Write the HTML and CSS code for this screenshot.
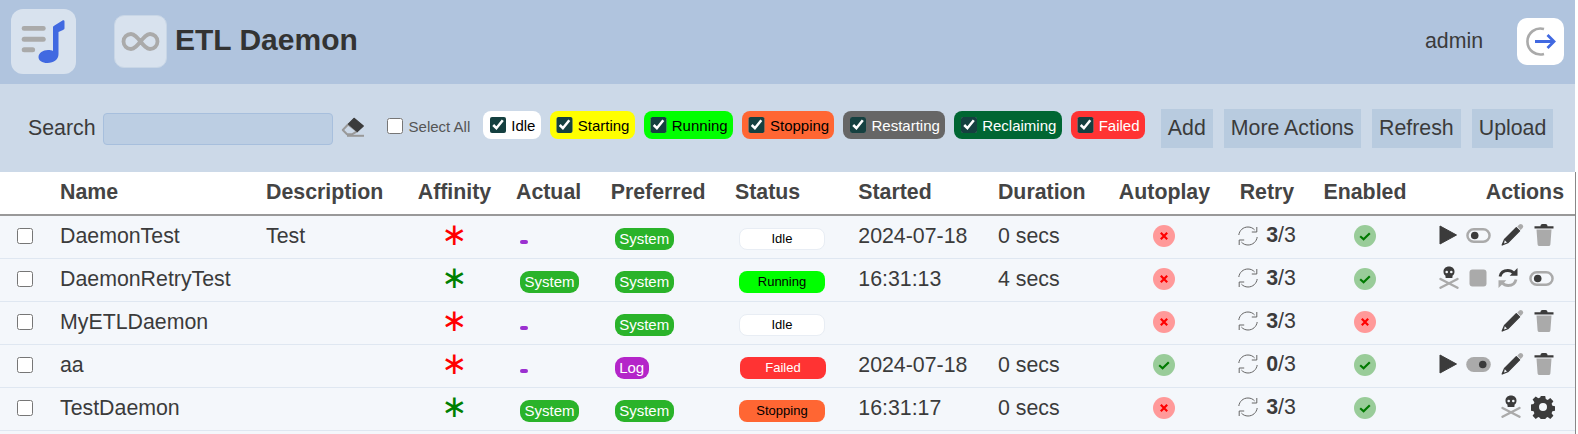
FILE: index.html
```html
<!DOCTYPE html>
<html lang="en">
<head>
<meta charset="utf-8">
<title>ETL Daemon</title>
<link rel="stylesheet" href="styles.css">
</head>
<body>
<svg class="defs" width="0" height="0" aria-hidden="true">
  <defs>
    <symbol id="i-play" viewBox="0 0 18 20"><path d="M1 1v18L17.500 10z" fill="#3b3b3b" stroke="#3b3b3b" stroke-width="1" stroke-linejoin="round"/></symbol>
    <symbol id="i-toggle" viewBox="0 0 26 18"><rect x="1.300" y="2.300" width="23.400" height="13.400" rx="6.700" fill="none" stroke="#aaa" stroke-width="2.600"/><circle cx="9" cy="9" r="4" fill="#3b3b3b"/></symbol>
    <symbol id="i-toggle-on" viewBox="0 0 26 18"><rect x="0" y="1" width="26" height="16" rx="8" fill="#aaa"/><circle cx="17.500" cy="9" r="4" fill="#3b3b3b"/></symbol>
    <symbol id="i-pencil" viewBox="0 0 24 24"><path d="M17.300 3.600l2-2a2 2 0 0 1 2.800 0l.5.5a2 2 0 0 1 0 2.800l-2 2z" fill="#aaa"/><path d="M16.300 4.600l3.300 3.300L7.800 19.700l-5.600 2.300 2.300-5.600z" fill="#3b3b3b" stroke="#3b3b3b" stroke-width="1.300" stroke-linejoin="round"/><path d="M4.800 17.200l2.200 2.200-3 1z" fill="#f4f7fb"/></symbol>
    <symbol id="i-trash" viewBox="0 0 20 24"><path d="M2.500 6.500h15l-1.100 15a1.800 1.800 0 0 1-1.800 1.500H5.400a1.800 1.800 0 0 1-1.800-1.500z" fill="#aaa"/><path d="M0.500 3.300h19v2.200H.5zM6.500 3.300c0-1.500.8-2.300 2-2.300h3c1.200 0 2 .8 2 2.300z" fill="#3b3b3b"/></symbol>
    <symbol id="i-skull" viewBox="0 0 20 24"><path d="M1.500 13l17 8.700M18.500 13l-17 8.700" stroke="#aaa" stroke-width="2.400" stroke-linecap="round"/><path d="M10 .5c-3.300 0-5.500 2.200-5.500 5.200 0 1.800.8 3.200 2 4v1.500c0 .5.400.9.900.9h5.200c.5 0 .9-.4.9-.9V9.700c1.200-.8 2-2.200 2-4 0-3-2.200-5.200-5.500-5.200z" fill="#3b3b3b"/><circle cx="7.700" cy="6" r="1.300" fill="#f4f7fb"/><circle cx="12.300" cy="6" r="1.300" fill="#f4f7fb"/></symbol>
    <symbol id="i-stop" viewBox="0 0 18 18"><rect x="0.500" y="0.500" width="17" height="17" rx="3" fill="#aaa"/></symbol>
    <symbol id="i-sync" viewBox="0 0 22 22"><path d="M3 9.500C3.800 5.800 6.800 3.500 10.800 3.500c2.500 0 4.500 1 5.800 2.500" fill="none" stroke="#3b3b3b" stroke-width="2.800"/><path d="M20.500 1v7.800h-7.800z" fill="#3b3b3b"/><path d="M19 12.500c-.8 3.700-3.800 6-7.800 6-2.500 0-4.500-1-5.800-2.500" fill="none" stroke="#aaa" stroke-width="2.800"/><path d="M1.500 21v-7.800h7.800z" fill="#aaa"/></symbol>
    <symbol id="i-gear" viewBox="0 0 24 24"><path fill="#3b3b3b" fill-rule="evenodd" d="M9.800 1h4.400l.6 3.100 1.900.8 2.600-1.800 3.100 3.100-1.800 2.600.8 1.900 3 .6v4.400l-3 .6-.8 1.900 1.800 2.600-3.100 3.100-2.600-1.800-1.900.8-.6 3H9.800l-.6-3-1.900-.8-2.600 1.800-3.100-3.100 1.800-2.600-.8-1.900-3-.6V9.700l3-.6.8-1.900-1.800-2.600 3.100-3.100 2.600 1.800 1.900-.8zM12 8a4 4 0 1 0 0 8 4 4 0 0 0 0-8z"/></symbol>
    <symbol id="i-retry" viewBox="0 0 20 20"><path d="M.8 9C1.500 4.300 5.200 1 10 1c2.700 0 5 1.100 6.600 2.900" fill="none" stroke="#666" stroke-width="1"/><path d="M18.800 1v5h-5" fill="none" stroke="#666" stroke-width="1"/><path d="M19.200 11c-.7 4.700-4.400 8-9.200 8-2.700 0-5-1.100-6.600-2.900" fill="none" stroke="#666" stroke-width="1"/><path d="M1.200 19v-5h5" fill="none" stroke="#666" stroke-width="1"/></symbol>
    <symbol id="i-no" viewBox="0 0 22 22"><circle cx="11" cy="11" r="11" fill="#ff9999"/><path d="M7.800 7.800l6.400 6.400M14.200 7.800l-6.400 6.400" stroke="#f00" stroke-width="2.200"/></symbol>
    <symbol id="i-yes" viewBox="0 0 22 22"><circle cx="11" cy="11" r="11" fill="#99cc99"/><path d="M6.200 11.300l3.400 3 6.200-6" fill="none" stroke="#007a00" stroke-width="2.200"/></symbol>
  </defs>
</svg>
<div class="page">
  <header class="top">
    <a class="app-tile" href="#" aria-label="Home">
      <svg viewBox="0 0 65 65" width="65" height="65"><rect x="10.700" y="17" width="24" height="4.700" rx="2.300" fill="#aaa"/><rect x="10.700" y="27.700" width="24" height="5" rx="2.500" fill="#aaa"/><rect x="10.700" y="38.300" width="13.400" height="5" rx="2.500" fill="#aaa"/><path d="M42 18.500C42 17.500 42.500 17 43.500 16.500L51.500 11.500C52.500 11 53.500 11.500 53.500 12.500V19C53.500 20 53 20.500 52 21L47.500 23V45C47.500 50.500 43 54 36.500 54C31 54 27.500 51.500 27.500 48C27.500 44 32 41 37 41C39 41 41 41.400 42 42Z" fill="#4169e1"/></svg>
    </a>
    <div class="title-group">
      <div class="module-tile">
        <svg viewBox="0 0 53 53" width="53" height="53"><path d="M26.500 26.500c-3.500-4.500-6-7.500-9.500-7.500a7.500 7.500 0 0 0 0 15c3.500 0 6-3 9.500-7.500s6-7.500 9.500-7.500a7.500 7.500 0 0 1 0 15c-3.500 0-6-3-9.500-7.500z" fill="none" stroke="#aaa" stroke-width="3.800"/></svg>
      </div>
      <h1>ETL Daemon</h1>
    </div>
    <div class="user-group">
      <span class="user">admin</span>
      <a class="logout" href="#" aria-label="Log out">
        <svg viewBox="0 0 47 47" width="47" height="47"><path d="M27 11a13 13 0 1 0 0 25" fill="none" stroke="#aaa" stroke-width="2.600"/><path d="M18 23.500h18M30.500 17l6.500 6.500-6.500 6.500" fill="none" stroke="#4169e1" stroke-width="2.800"/></svg>
      </a>
    </div>
  </header>

  <section class="toolbar">
    <label class="search">Search <input type="text" class="search-input"></label>
    <svg class="eraser" viewBox="0 0 24 22" width="24" height="22"><path d="M7 8.500L1.800 14l4.200 4.300h5l5-3z" fill="#ccd9e8" stroke="#999" stroke-width="2" stroke-linejoin="round"/><path d="M13 2.300L22.300 10l-6 5.500L7.500 8z" fill="#3b3b3b" stroke="#3b3b3b" stroke-width="1.200" stroke-linejoin="round"/><path d="M6 19.800h17" stroke="#999" stroke-width="2"/></svg>
    <label class="select-all"><input type="checkbox" class="box"> Select All</label>
    <div class="filters">
      <label class="chip st-idle"><input type="checkbox" checked> Idle</label>
      <label class="chip st-starting"><input type="checkbox" checked> Starting</label>
      <label class="chip st-running"><input type="checkbox" checked> Running</label>
      <label class="chip st-stopping"><input type="checkbox" checked> Stopping</label>
      <label class="chip st-restarting"><input type="checkbox" checked> Restarting</label>
      <label class="chip st-reclaiming"><input type="checkbox" checked> Reclaiming</label>
      <label class="chip st-failed"><input type="checkbox" checked> Failed</label>
    </div>
    <div class="buttons">
      <button type="button">Add</button>
      <button type="button">More Actions</button>
      <button type="button">Refresh</button>
      <button type="button">Upload</button>
    </div>
  </section>

  <div class="grid-wrap">
  <table class="grid">
    <colgroup>
      <col class="c-check"><col class="c-name"><col class="c-desc"><col class="c-aff"><col class="c-actual"><col class="c-pref"><col class="c-status"><col class="c-started"><col class="c-dur"><col class="c-auto"><col class="c-retry"><col class="c-en"><col class="c-actions">
    </colgroup>
    <thead>
      <tr>
        <th></th><th>Name</th><th>Description</th><th class="mid">Affinity</th><th>Actual</th><th>Preferred</th><th>Status</th><th>Started</th><th>Duration</th><th class="mid">Autoplay</th><th class="mid">Retry</th><th class="mid">Enabled</th><th class="end">Actions</th>
      </tr>
    </thead>
    <tbody>
      <tr>
        <td class="mid"><input type="checkbox" class="box"></td>
        <td>DaemonTest</td><td>Test</td>
        <td class="mid"><span class="star red">∗</span></td>
        <td class="low"><span class="tag dash"></span></td>
        <td class="low"><span class="tag sys">System</span></td>
        <td class="low"><span class="pill st-idle">Idle</span></td>
        <td>2024-07-18</td><td>0 secs</td>
        <td class="mid"><svg class="flag"><use href="#i-no"/></svg></td>
        <td class="mid"><span class="retry"><svg class="ret"><use href="#i-retry"/></svg><span><b>3</b>/3</span></span></td>
        <td class="mid"><svg class="flag"><use href="#i-yes"/></svg></td>
        <td class="ac"><div class="acts"><svg class="a-play"><use href="#i-play"/></svg><svg class="a-tog"><use href="#i-toggle"/></svg><svg class="a-pen"><use href="#i-pencil"/></svg><svg class="a-trash"><use href="#i-trash"/></svg></div></td>
      </tr>
      <tr>
        <td class="mid"><input type="checkbox" class="box"></td>
        <td>DaemonRetryTest</td><td></td>
        <td class="mid"><span class="star green">∗</span></td>
        <td class="low"><span class="tag sys">System</span></td>
        <td class="low"><span class="tag sys">System</span></td>
        <td class="low"><span class="pill st-running">Running</span></td>
        <td>16:31:13</td><td>4 secs</td>
        <td class="mid"><svg class="flag"><use href="#i-no"/></svg></td>
        <td class="mid"><span class="retry"><svg class="ret"><use href="#i-retry"/></svg><span><b>3</b>/3</span></span></td>
        <td class="mid"><svg class="flag"><use href="#i-yes"/></svg></td>
        <td class="ac"><div class="acts"><svg class="a-skull"><use href="#i-skull"/></svg><svg class="a-stop"><use href="#i-stop"/></svg><svg class="a-sync"><use href="#i-sync"/></svg><svg class="a-tog"><use href="#i-toggle"/></svg></div></td>
      </tr>
      <tr>
        <td class="mid"><input type="checkbox" class="box"></td>
        <td>MyETLDaemon</td><td></td>
        <td class="mid"><span class="star red">∗</span></td>
        <td class="low"><span class="tag dash"></span></td>
        <td class="low"><span class="tag sys">System</span></td>
        <td class="low"><span class="pill st-idle">Idle</span></td>
        <td></td><td></td>
        <td class="mid"><svg class="flag"><use href="#i-no"/></svg></td>
        <td class="mid"><span class="retry"><svg class="ret"><use href="#i-retry"/></svg><span><b>3</b>/3</span></span></td>
        <td class="mid"><svg class="flag"><use href="#i-no"/></svg></td>
        <td class="ac"><div class="acts"><svg class="a-pen"><use href="#i-pencil"/></svg><svg class="a-trash"><use href="#i-trash"/></svg></div></td>
      </tr>
      <tr>
        <td class="mid"><input type="checkbox" class="box"></td>
        <td>aa</td><td></td>
        <td class="mid"><span class="star red">∗</span></td>
        <td class="low"><span class="tag dash"></span></td>
        <td class="low"><span class="tag log">Log</span></td>
        <td class="low"><span class="pill st-failed shift">Failed</span></td>
        <td>2024-07-18</td><td>0 secs</td>
        <td class="mid"><svg class="flag"><use href="#i-yes"/></svg></td>
        <td class="mid"><span class="retry"><svg class="ret"><use href="#i-retry"/></svg><span><b>0</b>/3</span></span></td>
        <td class="mid"><svg class="flag"><use href="#i-yes"/></svg></td>
        <td class="ac"><div class="acts"><svg class="a-play"><use href="#i-play"/></svg><svg class="a-tog"><use href="#i-toggle-on"/></svg><svg class="a-pen"><use href="#i-pencil"/></svg><svg class="a-trash"><use href="#i-trash"/></svg></div></td>
      </tr>
      <tr>
        <td class="mid"><input type="checkbox" class="box"></td>
        <td>TestDaemon</td><td></td>
        <td class="mid"><span class="star green">∗</span></td>
        <td class="low"><span class="tag sys">System</span></td>
        <td class="low"><span class="tag sys">System</span></td>
        <td class="low"><span class="pill st-stopping">Stopping</span></td>
        <td>16:31:17</td><td>0 secs</td>
        <td class="mid"><svg class="flag"><use href="#i-no"/></svg></td>
        <td class="mid"><span class="retry"><svg class="ret"><use href="#i-retry"/></svg><span><b>3</b>/3</span></span></td>
        <td class="mid"><svg class="flag"><use href="#i-yes"/></svg></td>
        <td class="ac"><div class="acts"><svg class="a-skull"><use href="#i-skull"/></svg><svg class="a-gear"><use href="#i-gear"/></svg></div></td>
      </tr>
    </tbody>
  </table>
  </div>
</div>
</body>
</html>
```
FILE: styles.css
```css
* { box-sizing: border-box; }
html, body { margin: 0; padding: 0; height: 100%; overflow: hidden; background: #fff; }
body { font-family: "Liberation Sans", Arial, sans-serif; color: #3b3b3b; }
.defs { position: absolute; }
.page { width: 1575px; height: 434px; background: #f4f7fb; }

.top { height: 84px; background: #b0c4de; display: flex; align-items: center; padding: 0 11px; }
.app-tile { width: 65px; height: 65px; margin-top: -1px; background: #d8e2ee; border-radius: 12px; display: block; }
.app-tile svg, .module-tile svg, .logout svg { display: block; }
.title-group { display: flex; align-items: center; margin-left: 38px; margin-top: -2px; }
.module-tile { width: 53px; height: 53px; background: #d8e2ee; border: 1px solid #c8d6e6; border-radius: 10px; overflow: hidden; }
.module-tile svg { margin: -1px; }
h1 { margin: -2px 0 0 8px; font-size: 30px; font-weight: 700; color: #333; line-height: 1; }
.user-group { margin-left: auto; display: flex; align-items: center; margin-top: -2px; }
.user { font-size: 21.33px; margin-right: 34px; }
.logout { width: 47px; height: 47px; background: #fff; border-radius: 10px; display: block; }

.toolbar { height: 88px; background: #ccd9e8; display: flex; align-items: flex-start; padding: 25px 20px 0 28px; }
.search { display: flex; align-items: center; font-size: 21.33px; height: 39px; }
.search-input { width: 230px; height: 32px; margin-left: 7px; background: #bccee3; border: 1px solid #a7bfdd; border-radius: 4px; }
.eraser { margin: 7px 0 0 8px; flex: none; }
.select-all { display: flex; align-items: center; font-size: 15px; color: #555; margin: 5px 0 0 22px; height: 24px; white-space: nowrap; }
.box { appearance: auto; width: 16px; height: 16px; margin: 0 6px 0 0; }
td .box { margin: 0; vertical-align: middle; }
.filters { display: flex; gap: 9px; margin: 2px 0 0 13px; }
.chip { display: flex; align-items: center; height: 28px; padding: 0 5.3px 0 6.5px; border-radius: 8px; font-size: 15px; white-space: nowrap; }
.chip input { width: 16.5px; height: 16.5px; margin: 0 5px 0 0; accent-color: #154040; }
.buttons { display: flex; gap: 11px; margin-left: 16px; }
.buttons button { height: 39px; padding: 0 7px; border: 0; border-radius: 0; background: #b8cbdf; color: #3b3b3b; font: 21.33px "Liberation Sans", Arial, sans-serif; }

.st-idle { background: #fff; color: #000; }
.st-starting { background: #ff0; color: #000; }
.st-running { background: #0f0; color: #000; }
.st-stopping { background: #f63; color: #000; }
.st-restarting { background: #666; color: #fff; }
.st-reclaiming { background: #063; color: #fff; }
.st-failed { background: #f33; color: #fff; }

.grid-wrap { width: 1576px; height: 262px; border-right: 1px solid #888; }
.grid { width: 1575px; border-collapse: collapse; table-layout: fixed; font-size: 21.33px; }
.c-check { width: 50px; } .c-name { width: 206px; } .c-desc { width: 147px; } .c-aff { width: 103px; }
.c-actual { width: 94.7px; } .c-pref { width: 124.3px; } .c-status { width: 123.3px; } .c-started { width: 139.7px; }
.c-dur { width: 120px; } .c-auto { width: 113px; } .c-retry { width: 92px; } .c-en { width: 104px; } .c-actions { width: 158px; }
.grid thead tr { background: #fff; border-bottom: 2px solid #999; }
.grid th { height: 43px; text-align: left; font-weight: 700; padding: 0 10px 1px; color: #444; white-space: nowrap; }
.grid th.mid, .grid td.mid { text-align: center; }
.grid th.end { text-align: right; padding-right: 11px; }
.grid tbody tr { border-bottom: 1px solid #dfe7f1; }
.grid td { height: 43px; padding: 0 10px 1px; white-space: nowrap; vertical-align: middle; }
.grid td.mid, .grid td.ac { padding-bottom: 3px; }
.grid td.low { padding: 3px 10px 0; }
.red { color: #f00; } .green { color: #008000; }
.star { display: inline-block; height: 20px; margin-bottom: 4px; font: 400 31px/20px "DejaVu Sans", sans-serif; vertical-align: middle; }

.tag { display: inline-block; margin-left: 4px; border-radius: 9px; color: #fff; font-size: 15px; padding: 0 4.5px; line-height: 22px; vertical-align: middle; }
.tag.sys { background: #2ab32a; }
.tag.log { background: #b425c9; }
.tag.dash { background: #9b30d0; width: 8px; height: 4px; padding: 0; border-radius: 2px; margin-top: 6px; }
.pill { display: inline-block; width: 86px; height: 22px; text-align: center; border-radius: 8px; font-size: 13px; margin-left: 4px; border: 1px solid #e8edf4; line-height: 20px; vertical-align: middle; }
.pill.st-running, .pill.st-stopping, .pill.st-failed { border-color: transparent; }
.pill.shift { margin-left: 5px; }

.flag { width: 22px; height: 22px; display: inline-block; vertical-align: middle; }
.retry { display: inline-flex; align-items: center; gap: 8px; vertical-align: middle; }
.ret { width: 20px; height: 20px; }
.retry b { font-weight: 700; }
.acts { display: flex; align-items: center; justify-content: flex-end; gap: 10px; padding-right: 11px; }
.acts svg { flex: none; display: block; }
.a-play { width: 18px; height: 20px; margin-right: -1px; }
.a-tog { width: 25px; height: 17px; }
.a-pen { width: 24px; height: 24px; margin-left: -1px; }
.a-trash { width: 20px; height: 24px; }
.a-skull { width: 20px; height: 24px; }
.a-stop { width: 18px; height: 18px; }
.a-sync { width: 22px; height: 22px; }
.a-gear { width: 24px; height: 24px; margin-right: -1px; }
```
